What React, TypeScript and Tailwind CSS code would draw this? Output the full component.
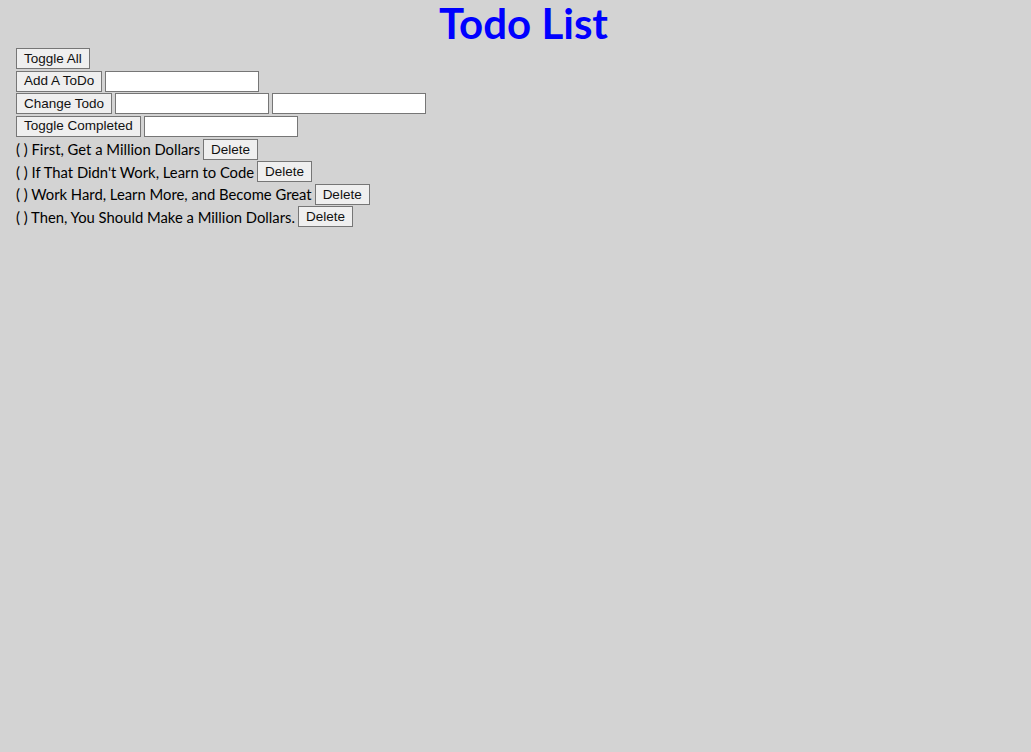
import { useState } from "react";

interface Todo {
  text: string;
  completed: boolean;
}

const initialTodos: Todo[] = [
  { text: "First, Get a Million Dollars", completed: false },
  { text: "If That Didn't Work, Learn to Code", completed: false },
  { text: "Work Hard, Learn More, and Become Great", completed: false },
  { text: "Then, You Should Make a Million Dollars.", completed: false },
];

const btn =
  "h-[21px] shrink-0 border border-[#767676] bg-[#efefef] px-[7px] text-[13.5px] leading-none text-[#111] font-['Liberation_Sans',Arial,sans-serif]";
const input = "h-[21px] w-[154px] shrink-0 border border-[#767676] bg-white px-[2px] text-[13.33px]";

export default function App() {
  const [todos] = useState<Todo[]>(initialTodos);

  return (
    <div className="min-h-[752px] bg-[#d3d3d3] pl-4 font-['Lato','Noto_Sans',sans-serif] text-black">
      <h1 className="h-12 text-center text-[42px] font-bold leading-[46px] text-[#0000ff]">Todo List</h1>

      <div className="flex h-[22.5px] items-start gap-[3px]">
        <button className={btn}>Toggle All</button>
      </div>
      <div className="flex h-[22.5px] items-start gap-[3px]">
        <button className={btn}>Add A ToDo</button>
        <input className={input} />
      </div>
      <div className="flex h-[22.5px] items-start gap-[3px]">
        <button className={btn}>Change Todo</button>
        <input className={input} />
        <input className={input} />
      </div>
      <div className="flex h-[22.5px] items-start gap-[3px]">
        <button className={btn}>Toggle Completed</button>
        <input className={input} />
      </div>

      {todos.map((todo) => (
        <div key={todo.text} className="flex h-[22.5px] items-center gap-[3px] text-[14.8px]">
          <span>
            ({todo.completed ? "x" : " "}) {todo.text}
          </span>
          <button className={btn}>Delete</button>
        </div>
      ))}
    </div>
  );
}
